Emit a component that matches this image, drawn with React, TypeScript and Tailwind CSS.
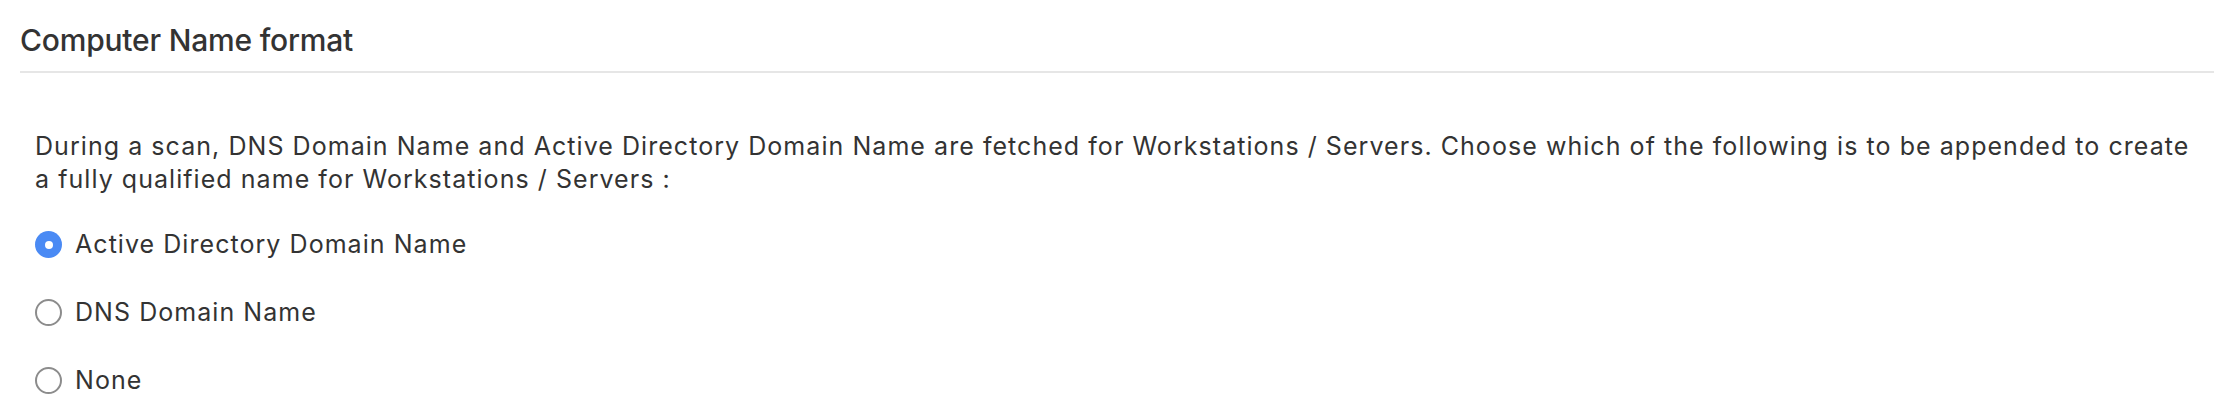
import React, { useState } from 'react';

const OPTIONS = ['Active Directory Domain Name', 'DNS Domain Name', 'None'];

const Radio: React.FC<{ checked: boolean }> = ({ checked }) =>
  checked ? (
    <span className="w-[27px] h-[27px] rounded-full bg-[#4a8af4] flex items-center justify-center shrink-0">
      <span className="w-[8px] h-[8px] rounded-full bg-white"></span>
    </span>
  ) : (
    <span className="w-[27px] h-[27px] rounded-full border-2 border-[#8c8c8c] bg-white shrink-0"></span>
  );

const App: React.FC = () => {
  const [selected, setSelected] = useState(0);

  return (
    <div className="w-[2214px] h-[416px] bg-white text-[#333333] font-['Inter','Liberation_Sans',sans-serif] overflow-hidden">
      {/* Section header */}
      <div className="ml-[20px] pt-[22px] pb-[13px] border-b-2 border-[#e6e6e6]">
        <h2 className="text-[30px] leading-[36px] font-medium tracking-[-0.2px]">Computer Name format</h2>
      </div>

      <div className="pl-[35px] pr-[8px] pt-[57px] text-[25px] leading-[33px] tracking-[1.05px]">
        <p>
          During a scan, DNS Domain Name and Active Directory Domain Name are fetched for Workstations / Servers. Choose which of the following is to be appended to create a fully qualified name for Workstations / Servers :
        </p>

        <div className="mt-[32px] flex flex-col gap-[35px]">
          {OPTIONS.map((label, i) => (
            <label key={label} className="flex items-center gap-[13px] cursor-pointer" onClick={() => setSelected(i)}>
              <Radio checked={selected === i} />
              <span>{label}</span>
            </label>
          ))}
        </div>
      </div>
    </div>
  );
};

export default App;
